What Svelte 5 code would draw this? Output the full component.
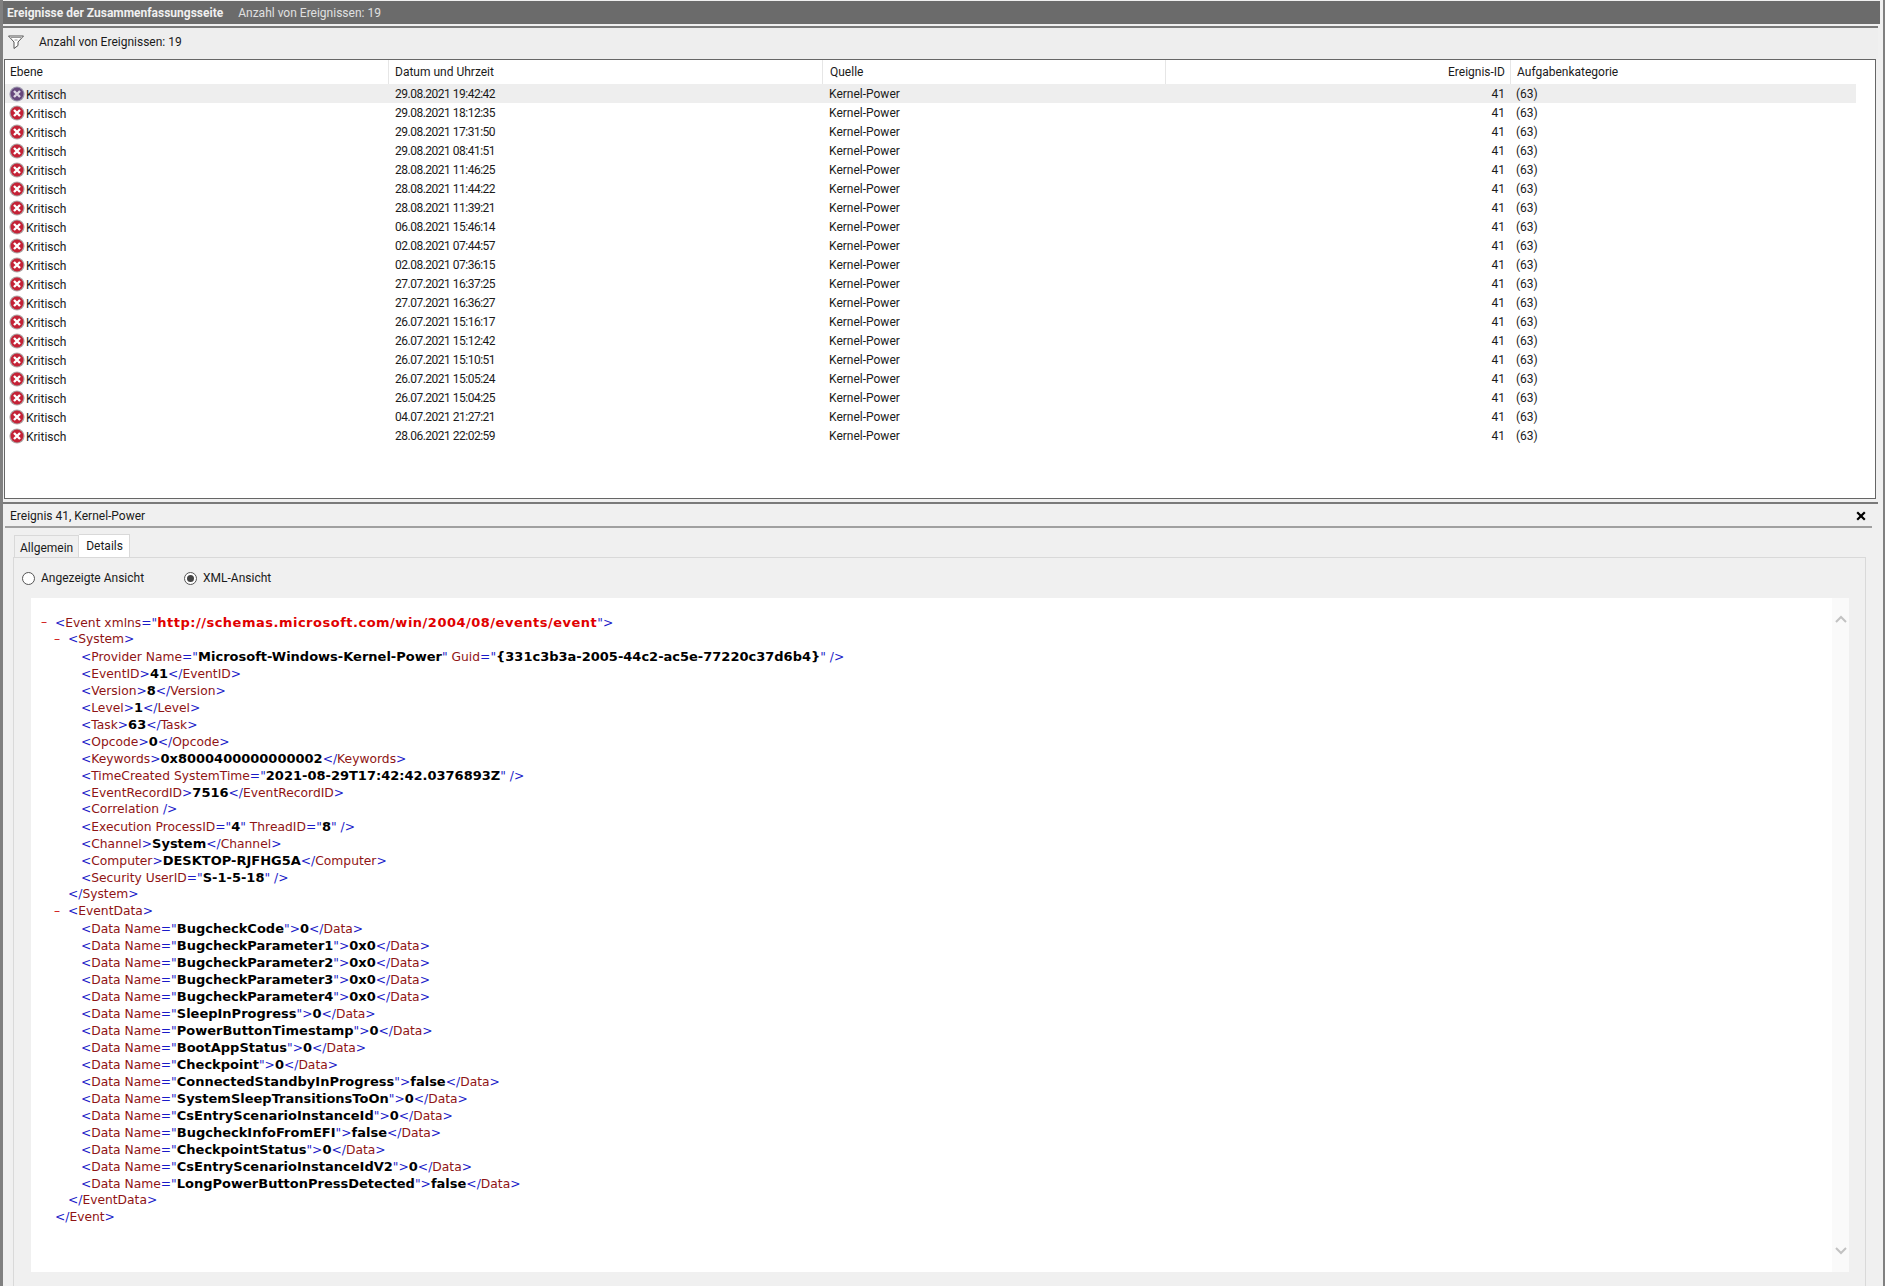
<script>
  const times = [
    '29.08.2021 19:42:42', '29.08.2021 18:12:35', '29.08.2021 17:31:50', '29.08.2021 08:41:51',
    '28.08.2021 11:46:25', '28.08.2021 11:44:22', '28.08.2021 11:39:21', '06.08.2021 15:46:14',
    '02.08.2021 07:44:57', '02.08.2021 07:36:15', '27.07.2021 16:37:25', '27.07.2021 16:36:27',
    '26.07.2021 15:16:17', '26.07.2021 15:12:42', '26.07.2021 15:10:51', '26.07.2021 15:05:24',
    '26.07.2021 15:04:25', '04.07.2021 21:27:21', '28.06.2021 22:02:59'
  ];

  const dataRows = [
    ['BugcheckCode', '0'], ['BugcheckParameter1', '0x0'], ['BugcheckParameter2', '0x0'],
    ['BugcheckParameter3', '0x0'], ['BugcheckParameter4', '0x0'], ['SleepInProgress', '0'],
    ['PowerButtonTimestamp', '0'], ['BootAppStatus', '0'], ['Checkpoint', '0'],
    ['ConnectedStandbyInProgress', 'false'], ['SystemSleepTransitionsToOn', '0'],
    ['CsEntryScenarioInstanceId', '0'], ['BugcheckInfoFromEFI', 'false'],
    ['CheckpointStatus', '0'], ['CsEntryScenarioInstanceIdV2', '0'],
    ['LongPowerButtonPressDetected', 'false']
  ];

  // [indent level, has collapse mark, raw xml]
  const xml = [
    [0, true, '<Event xmlns="http://schemas.microsoft.com/win/2004/08/events/event">'],
    [1, true, '<System>'],
    [2, false, '<Provider Name="Microsoft-Windows-Kernel-Power" Guid="{331c3b3a-2005-44c2-ac5e-77220c37d6b4}" />'],
    [2, false, '<EventID>41</EventID>'],
    [2, false, '<Version>8</Version>'],
    [2, false, '<Level>1</Level>'],
    [2, false, '<Task>63</Task>'],
    [2, false, '<Opcode>0</Opcode>'],
    [2, false, '<Keywords>0x8000400000000002</Keywords>'],
    [2, false, '<TimeCreated SystemTime="2021-08-29T17:42:42.0376893Z" />'],
    [2, false, '<EventRecordID>7516</EventRecordID>'],
    [2, false, '<Correlation />'],
    [2, false, '<Execution ProcessID="4" ThreadID="8" />'],
    [2, false, '<Channel>System</Channel>'],
    [2, false, '<Computer>DESKTOP-RJFHG5A</Computer>'],
    [2, false, '<Security UserID="S-1-5-18" />'],
    [1, false, '</System>'],
    [1, true, '<EventData>'],
    ...dataRows.map(([n, v]) => [2, false, `<Data Name="${n}">${v}</Data>`]),
    [1, false, '</EventData>'],
    [0, false, '</Event>']
  ];

  // splits a raw line into coloured pieces
  function tokenize(line) {
    const out = [];
    const re = /<\/?|\s?\/>|>|="[^"]*"|[^<>="/]+/g;
    let afterOpen = false;
    for (const m of line.match(re)) {
      if (m.startsWith('=')) {
        const val = m.slice(2, -1);
        out.push(['punct', '="'], [val.startsWith('http') ? 'url' : 'val', val], ['punct', '"']);
      } else if (m.startsWith('<')) {
        out.push(['punct', m]);
        afterOpen = true;
      } else if (m.endsWith('>')) {
        out.push(['punct', m]);
        afterOpen = false;
      } else if (afterOpen || /^\s*\w+$/.test(m) && line.includes(m + '="')) {
        out.push(['name', m]);
      } else {
        out.push(['val', m]);
      }
    }
    return out;
  }
</script>

{#snippet critical(muted)}
  <svg class="icon" viewBox="0 0 16 16" width="16" height="16">
    <circle cx="8" cy="8" r="7.6" fill={muted ? '#a09cb0' : '#b0a8a8'} />
    <circle cx="8" cy="8" r="6.4" fill={muted ? '#66487c' : '#c42236'} />
    <path d="M5 5l6 6M11 5l-6 6" stroke={muted ? '#dcd6e2' : '#fff'} stroke-width="2.4" />
  </svg>
{/snippet}

<div class="page">
  <header class="titlebar">
    <b>Ereignisse der Zusammenfassungsseite</b>
    <span>Anzahl von Ereignissen: 19</span>
  </header>

  <section class="events">
    <div class="filter">
      <svg viewBox="0 0 16 14" width="16" height="14">
        <path d="M.5 1h15L10 7v3.5l-4 3V7z" fill="#fff" stroke="#555" />
        <path d="M3 2.5h10M6.5 5h3" stroke="#999" />
      </svg>
      <span>Anzahl von Ereignissen: 19</span>
    </div>

    <div class="list">
      <div class="row head">
        <div class="c1">Ebene</div>
        <div class="c2">Datum und Uhrzeit</div>
        <div class="c3">Quelle</div>
        <div class="c4">Ereignis-ID</div>
        <div class="c5">Aufgabenkategorie</div>
      </div>
      {#each times as time, i}
        <div class="row" class:selected={i === 0}>
          <div class="c1">{@render critical(i === 0)}<span class="level">Kritisch</span></div>
          <div class="c2 date">{time}</div>
          <div class="c3">Kernel-Power</div>
          <div class="c4">41</div>
          <div class="c5">(63)</div>
        </div>
      {/each}
    </div>
  </section>

  <section class="detail">
    <div class="detail-title">
      <span>Ereignis 41, Kernel-Power</span>
      <svg viewBox="0 0 10 10" width="10" height="10">
        <path d="M1.2 1.2l7.6 7.6M8.8 1.2L1.2 8.8" stroke="#000" stroke-width="2.2" />
      </svg>
    </div>

    <div class="tabs">
      <div class="tab">Allgemein</div>
      <div class="tab active">Details</div>
    </div>

    <div class="panel">
      <div class="radios">
        <label><span class="radio"></span>Angezeigte Ansicht</label>
        <label><span class="radio on"></span>XML-Ansicht</label>
      </div>

      <div class="xmlbox">
        <div class="xml">
          {#each xml as [level, mark, raw]}
            <div class="line" style="padding-left: {level * 13 + 25}px">
              {#if mark}<span class="mark">–</span>{/if}
              {#each tokenize(raw) as [kind, text]}<span class={kind}>{text}</span>{/each}
            </div>
          {/each}
        </div>
        <div class="scroll">
          <svg viewBox="0 0 12 8" width="12" height="8"><path d="M1 7l5-5 5 5" fill="none" stroke="#c2c2c2" stroke-width="2" /></svg>
          <svg viewBox="0 0 12 8" width="12" height="8"><path d="M1 1l5 5 5-5" fill="none" stroke="#c2c2c2" stroke-width="2" /></svg>
        </div>
      </div>
    </div>
  </section>
</div>

<style>
  :global(body) {
    margin: 0;
    background: #fff;
    overflow: hidden;
  }
  .page {
    width: 1885px;
    height: 1286px;
    box-sizing: border-box;
    padding-top: 1px;
    background: #f0f0f0;
    border-left: 3px solid #808080;
    border-right: 2px solid #808080;
    font: 12px/16px Roboto, "Noto Sans", sans-serif;
    color: #1a1a1a;
    overflow: hidden;
  }
  .titlebar {
    height: 23px;
    width: 1877px;
    background: #6b6b6b;
    color: #f0f0f0;
    display: flex;
    align-items: center;
    gap: 15px;
    padding-left: 4px;
    box-sizing: border-box;
  }
  .titlebar span { color: #e0e0e0; }
  .events {
    margin-top: 2px;
    border-top: 2px solid #7a7a7a;
    width: 1875px;
  }
  .filter {
    height: 31px;
    display: flex;
    align-items: center;
    gap: 15px;
    padding: 0 0 3px 5px;
    box-sizing: border-box;
    background: #eeeeee;
  }
  .list {
    margin-left: 1px;
    height: 440px;
    width: 1872px;
    background: #fff;
    border: 1px solid #666;
    box-sizing: border-box;
  }
  .row {
    display: grid;
    grid-template-columns: 383px 434px 343px 345px 346px;
    height: 19px;
    width: 1851px;
    line-height: 21px;
  }
  .row > div {
    padding-left: 6px;
    white-space: nowrap;
  }
  .head {
    height: 24px;
    line-height: 24px;
  }
  .head > div + div { border-left: 1px solid #e6e6e6; }
  .row > .c3 { padding-left: 7px; }
  .row > .c4 {
    text-align: right;
    padding-right: 5px;
    padding-left: 0;
  }
  .row > .c5 { padding-left: 6px; }
  .row > .c1 {
    display: flex;
    align-items: center;
    gap: 1px;
    padding-left: 4px;
  }
  .head > .c1 { padding-left: 5px; }
  .level {
    line-height: 19px;
    margin-top: 1px;
  }
  .row > .date {
    letter-spacing: -0.5px;
    padding-left: 7px;
  }
  .selected { background: #eeeeee; }
  .icon {
    flex: none;
    margin-top: -1px;
  }
  .detail {
    margin-top: 3px;
    width: 1875px;
    border-top: 2px solid #7a7a7a;
    padding: 0 5px 0 2px;
    box-sizing: border-box;
  }
  .detail-title {
    height: 20px;
    margin-right: 1px;
    display: flex;
    align-items: center;
    justify-content: space-between;
    padding: 2px 6px 0 5px;
    border-bottom: 2px solid #a0a0a0;
  }
  .tabs {
    display: flex;
    align-items: flex-end;
    height: 29px;
    padding-left: 9px;
  }
  .tab {
    height: 21px;
    line-height: 24px;
    padding: 0 5px;
    border: 1px solid #d9d9d9;
    border-bottom: 0;
    box-sizing: content-box;
  }
  .tab.active {
    height: 22px;
    line-height: 22px;
    padding: 0 6px 0 7px;
    background: #fff;
    border-left: 0;
  }
  .panel {
    margin-left: 8px;
    margin-right: 7px;
    border-top: 1px solid #d9d9d9;
    border-left: 1px solid #d9d9d9;
    border-right: 1px solid #d9d9d9;
    height: 730px;
    padding: 0 16px 0 17px;
  }
  .radios {
    height: 40px;
    display: flex;
    align-items: center;
    gap: 40px;
    margin-left: -9px;
  }
  .radios label {
    display: flex;
    align-items: center;
    gap: 6px;
  }
  .radio {
    width: 11px;
    height: 11px;
    border: 1px solid #555;
    border-radius: 50%;
    background: #fff;
    position: relative;
  }
  .radio.on::after {
    content: '';
    position: absolute;
    inset: 2px;
    border-radius: 50%;
    background: #444;
  }
  .xmlbox {
    height: 674px;
    background: #fff;
    display: flex;
    justify-content: space-between;
  }
  .xml {
    padding-top: 16px;
    margin-left: -5px;
    font: 12.3px/17px "DejaVu Sans", Verdana, sans-serif;
  }
  .line {
    position: relative;
    height: 17px;
    white-space: pre;
  }
  .mark {
    position: absolute;
    margin-left: -10px;
    color: #d01010;
  }
  .punct { color: #1a1ac8; }
  .name { color: #8f1414; }
  .val {
    color: #000;
    font-weight: bold;
    font-size: 13px;
  }
  .url {
    color: #e00000;
    font-weight: bold;
    font-size: 13px;
    letter-spacing: 0.5px;
  }
  .scroll {
    width: 17px;
    background: #fafafa;
    display: flex;
    flex-direction: column;
    justify-content: space-between;
    align-items: center;
    padding: 17px 0 17px;
    box-sizing: border-box;
  }
</style>
